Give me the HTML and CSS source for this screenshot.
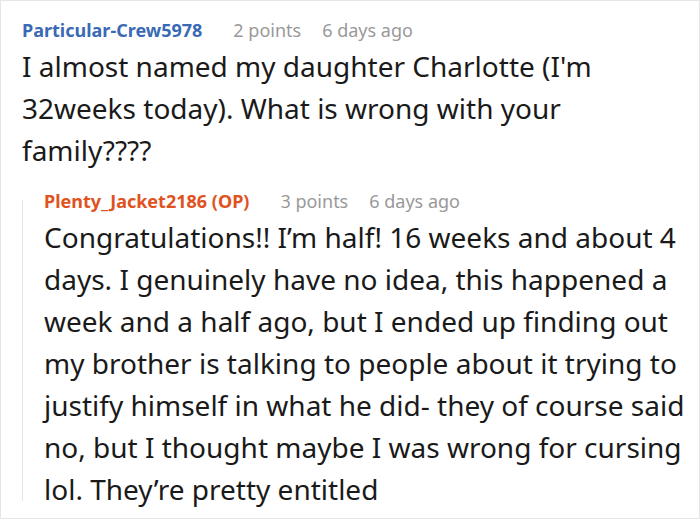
FILE: index.html
```html
<!DOCTYPE html>
<html>
<head>
<meta charset="utf-8">
<link rel="stylesheet" href="styles.css">
</head>
<body>
<div class="card">
  <div class="comment">
    <div class="meta">
      <span class="user">Particular-Crew5978</span>
      <span class="info">2 points</span>
      <span class="info">6 days ago</span>
    </div>
    <p class="text">I almost named my daughter Charlotte (I'm 32weeks today). What is wrong with your family????</p>
  </div>
  <div class="reply">
    <div class="meta">
      <span class="user op">Plenty_Jacket2186 (OP)</span>
      <span class="info">3 points</span>
      <span class="info">6 days ago</span>
    </div>
    <p class="text">Congratulations!! I’m half! 16 weeks and about 4 days. I genuinely have no idea, this happened a week and a half ago, but I ended up finding out my brother is talking to people about it trying to justify himself in what he did- they of course said no, but I thought maybe I was wrong for cursing lol. They’re pretty entitled</p>
  </div>
</div>
</body>
</html>
```

FILE: styles.css
```css
html, body {
  margin: 0;
  padding: 0;
  background: #ffffff;
}
.card {
  width: 700px;
  height: 519px;
  box-sizing: border-box;
  border: 1px solid #e6e6e6;
  padding: 15px 8px 0 21px;
  font-family: "Noto Sans", "Open Sans", sans-serif;
  color: #1a1a1a;
  overflow: hidden;
}
.meta {
  display: flex;
  gap: 21px;
  font-size: 18px;
  line-height: 28px;
}
.user {
  font-weight: bold;
  color: #3a6ab4;
  margin-right: 10px;
}
.user.op {
  color: #e0531f;
}
.info {
  color: #999999;
}
.text {
  margin: 1px 0 0;
  font-size: 28px;
  line-height: 42px;
}
.reply {
  position: relative;
  margin-top: 16px;
  padding-left: 22px;
}
.reply::before {
  content: "";
  position: absolute;
  left: 0;
  top: 13px;
  bottom: 9px;
  width: 1px;
  background: #e4e4e4;
}
```
